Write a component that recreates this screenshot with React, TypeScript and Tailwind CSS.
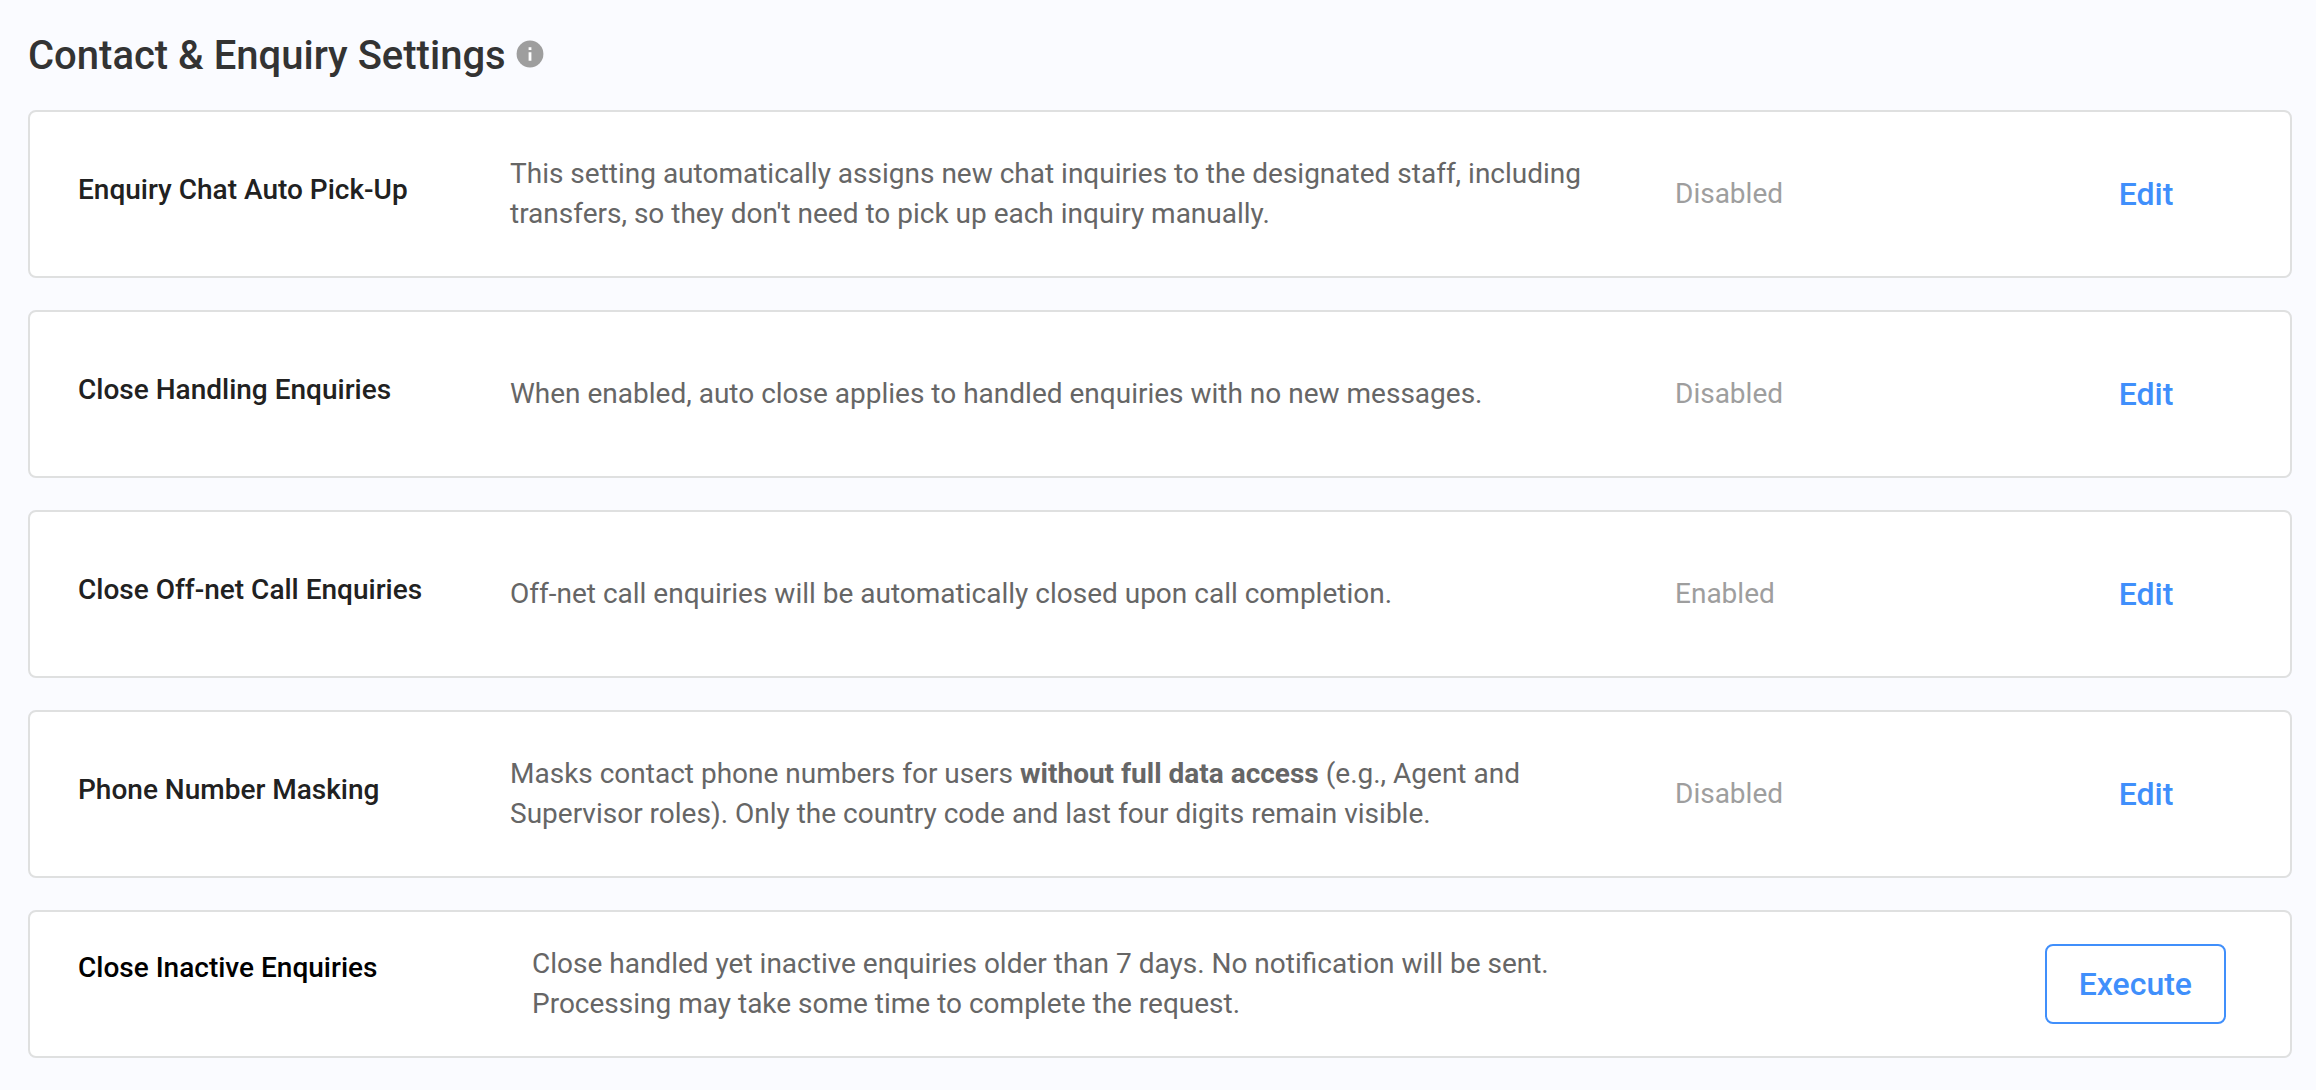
import { ReactNode } from 'react';

type Setting = {
  title: string;
  description: ReactNode;
  status: string;
};

const settings: Setting[] = [
  {
    title: 'Enquiry Chat Auto Pick-Up',
    description:
      "This setting automatically assigns new chat inquiries to the designated staff, including transfers, so they don't need to pick up each inquiry manually.",
    status: 'Disabled',
  },
  {
    title: 'Close Handling Enquiries',
    description: 'When enabled, auto close applies to handled enquiries with no new messages.',
    status: 'Disabled',
  },
  {
    title: 'Close Off-net Call Enquiries',
    description: 'Off-net call enquiries will be automatically closed upon call completion.',
    status: 'Enabled',
  },
  {
    title: 'Phone Number Masking',
    description: (
      <>
        Masks contact phone numbers for users <strong className="font-bold">without full data access</strong> (e.g.,
        Agent and Supervisor roles). Only the country code and last four digits remain visible.
      </>
    ),
    status: 'Disabled',
  },
];

function InfoIcon() {
  return (
    <svg className="w-7 h-7 mb-1" viewBox="0 0 28 28" aria-hidden="true">
      <circle cx="14" cy="14" r="13.4" fill="#9e9e9e" />
      <path d="M12.6 7.2h2.8V10h-2.8zM12.6 12.2h2.8v8.6h-2.8z" fill="#fff" />
    </svg>
  );
}

function SettingRow({ title, description, status }: Setting) {
  return (
    <section className="flex items-center h-[168px] pl-12 bg-white border-2 border-[#dfe0e0] rounded-lg">
      <h2 className="w-[432px] shrink-0 pb-2 text-[28px] leading-10 font-medium text-[#212121]">{title}</h2>
      <div className="flex-1 pr-20">
        <p className="max-w-[1080px] text-[28px] leading-10 text-[#666]">{description}</p>
      </div>
      <p className="w-[327px] shrink-0 text-[28px] leading-10 text-[#9e9e9e]">{status}</p>
      <div className="w-72 shrink-0 flex justify-center">
        <button type="button" className="text-[32px] leading-10 font-medium text-[#408ffb]">
          Edit
        </button>
      </div>
    </section>
  );
}

export default function App() {
  return (
    <main className="min-h-screen bg-[#fafbff] pl-7 pr-6 pt-[34px] pb-8 font-['Roboto',sans-serif]">
      <header className="flex items-center gap-2.5">
        <h1 className="text-[40px] leading-[44px] font-medium text-[#333]">Contact &amp; Enquiry Settings</h1>
        <InfoIcon />
      </header>
      <div className="mt-8 flex flex-col gap-8">
        {settings.map((setting) => (
          <SettingRow key={setting.title} {...setting} />
        ))}
        <section className="flex items-center h-[148px] pl-12 pr-16 bg-white border-2 border-[#dfe0e0] rounded-lg">
          <h2 className="w-[454px] shrink-0 pb-8 text-[28px] leading-10 font-medium text-black">
            Close Inactive Enquiries
          </h2>
          <div className="flex-1">
            <p className="max-w-[1080px] text-[28px] leading-10 text-[#666]">
              Close handled yet inactive enquiries older than 7 days. No notification will be sent. Processing may take
              some time to complete the request.
            </p>
          </div>
          <button
            type="button"
            className="h-20 px-8 border-2 border-[#408ffb] rounded-lg text-[32px] leading-10 font-medium text-[#408ffb]"
          >
            Execute
          </button>
        </section>
      </div>
    </main>
  );
}
